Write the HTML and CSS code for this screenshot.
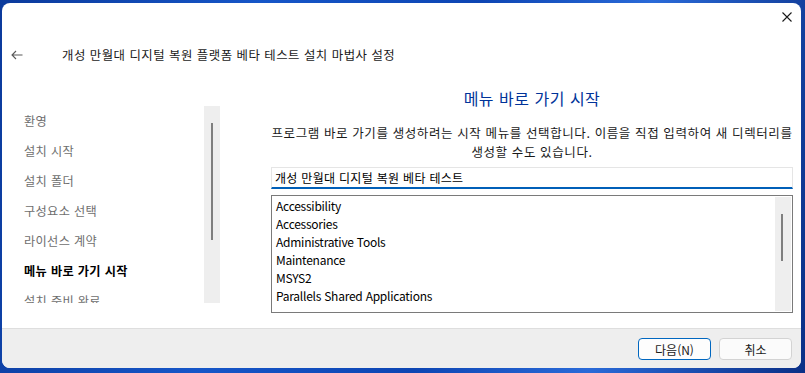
FILE: index.html
```html
<!DOCTYPE html>
<html lang="ko">
<head>
    <meta charset="UTF-8">
    <title>설치 마법사</title>
    <link rel="stylesheet" href="styles.css">
</head>
<body>
    <div class="window">
        <!-- 제목 표시줄 -->
        <div class="titlebar">
            <svg class="close-icon" width="10" height="10" viewBox="0 0 10 10">
                <path d="M0.5 0.5 L9.5 9.5 M9.5 0.5 L0.5 9.5" stroke="#1a1a1a" stroke-width="1.1" fill="none"/>
            </svg>
        </div>

        <div class="header">
            <svg class="back-icon" width="12" height="10" viewBox="0 0 12 10">
                <path d="M11.5 5 H1 M5 1 L1 5 L5 9" stroke="#5a5a5a" stroke-width="1.1" fill="none"/>
            </svg>
            <span class="title">개성 만월대 디지털 복원 플랫폼 베타 테스트 설치 마법사 설정</span>
        </div>

        <div class="main">
            <!-- 단계 목록 -->
            <div class="sidebar">
                <div class="steps">
                    <div class="step">환영</div>
                    <div class="step">설치 시작</div>
                    <div class="step">설치 폴더</div>
                    <div class="step">구성요소 선택</div>
                    <div class="step">라이선스 계약</div>
                    <div class="step active">메뉴 바로 가기 시작</div>
                    <div class="step">설치 준비 완료</div>
                </div>
                <div class="scroll-track side-track">
                    <div class="scroll-thumb side-thumb"></div>
                </div>
            </div>

            <!-- 페이지 내용 -->
            <div class="content">
                <h1 class="page-title">메뉴 바로 가기 시작</h1>
                <p class="description">프로그램 바로 가기를 생성하려는 시작 메뉴를 선택합니다. 이름을 직접 입력하여 새 디렉터리를 생성할 수도 있습니다.</p>
                <input type="text" class="folder-input" value="개성 만월대 디지털 복원 베타 테스트">
                <div class="folder-list">
                    <div class="items">
                        <div class="item">Accessibility</div>
                        <div class="item">Accessories</div>
                        <div class="item">Administrative Tools</div>
                        <div class="item">Maintenance</div>
                        <div class="item">MSYS2</div>
                        <div class="item">Parallels Shared Applications</div>
                    </div>
                    <div class="scroll-track list-track">
                        <div class="scroll-thumb list-thumb"></div>
                    </div>
                </div>
            </div>
        </div>

        <div class="footer">
            <button class="btn btn-primary">다음(N)</button>
            <button class="btn">취소</button>
        </div>
    </div>
</body>
</html>
```

FILE: styles.css
```css
/* 바탕화면 */
html, body {
    margin: 0;
    padding: 0;
    height: 100%;
    overflow: hidden;
}

body {
    background: linear-gradient(100deg, #0b3a9c 0%, #1656c8 30%, #0d45b3 55%, #2a6ad8 75%, #0a2f86 100%);
    font-family: "Noto Sans CJK KR", "Noto Sans", sans-serif;
    color: #1a1a1a;
}

.window {
    margin: 3px 0 0 2px;
    width: 799px;
    height: 365px;
    background-color: #ffffff;
    border-radius: 8px;
    display: flex;
    flex-direction: column;
    overflow: hidden;
}

.titlebar {
    height: 28px;
    display: flex;
    justify-content: flex-end;
    align-items: center;
    padding-right: 9px;
}

.close-icon {
    display: block;
}

.header {
    height: 48px;
    display: flex;
    align-items: center;
    padding-left: 9px;
}

.back-icon {
    display: block;
}

.title {
    margin-left: 39px;
    font-size: 12.4px;
    letter-spacing: 0.5px;
    color: #1a1a1a;
}

/* 본문 */
.main {
    flex: 1;
    display: flex;
}

.sidebar {
    width: 218px;
    padding-top: 27px;
    display: flex;
    align-items: flex-start;
}

.steps {
    width: 180px;
    height: 197px;
    padding-left: 22px;
    overflow: hidden;
}

.step {
    height: 30px;
    line-height: 30px;
    font-size: 12.2px;
    letter-spacing: 0.35px;
    color: #6e6e6e;
    white-space: nowrap;
}

.step.active {
    color: #000000;
    font-weight: bold;
}

.scroll-track {
    background-color: #eeeeee;
    box-sizing: border-box;
}

.scroll-thumb {
    width: 2px;
    background-color: #7f7f7f;
}

.side-track {
    width: 16px;
    height: 197px;
    padding: 17px 0 0 7px;
}

.side-thumb {
    height: 117px;
}

.content {
    flex: 1;
    padding: 0 8px 0 51px;
    display: flex;
    flex-direction: column;
}

.page-title {
    margin: 9px 0 0 0;
    font-size: 16px;
    line-height: 20px;
    letter-spacing: 0.5px;
    font-weight: normal;
    color: #003399;
    text-align: center;
}

.description {
    margin: 15px 0 0 0;
    font-size: 12.5px;
    line-height: 19px;
    letter-spacing: 0.6px;
    text-align: center;
    color: #1a1a1a;
}

.folder-input {
    margin-top: 6px;
    height: 22px;
    box-sizing: border-box;
    width: 100%;
    border: 1px solid #e5e5e5;
    border-bottom: 2px solid #005fb8;
    padding: 0 3px;
    font-family: "Noto Sans CJK KR", "Noto Sans", sans-serif;
    font-size: 12px;
    letter-spacing: 0.3px;
    color: #000000;
    outline: none;
}

.folder-list {
    margin-top: 6px;
    height: 118px;
    box-sizing: border-box;
    border: 1px solid #7a7a7a;
    display: flex;
}

.items {
    flex: 1;
    padding: 1px 0 0 4px;
}

.item {
    height: 18px;
    line-height: 18px;
    font-size: 12px;
    letter-spacing: -0.25px;
    color: #000000;
}

.list-track {
    width: 16px;
    margin: 1px 1px 1px 0;
    padding: 17px 0 0 6px;
}

.list-thumb {
    height: 47px;
}

/* 하단 버튼 */
.footer {
    height: 40px;
    border-top: 1px solid #dedede;
    background-color: #eeeeee;
    display: flex;
    justify-content: flex-end;
    align-items: flex-start;
    gap: 8px;
    padding: 9px 9px 0 0;
    box-sizing: border-box;
}

.btn {
    width: 73px;
    height: 22px;
    padding: 0;
    border: 1px solid #d3d3d3;
    border-radius: 4px;
    background-color: #fbfbfb;
    font-family: "Noto Sans CJK KR", "Noto Sans", sans-serif;
    font-size: 12px;
    color: #1a1a1a;
}

.btn-primary {
    border-color: #0067c0;
    background-color: #fdfdfd;
}
```
